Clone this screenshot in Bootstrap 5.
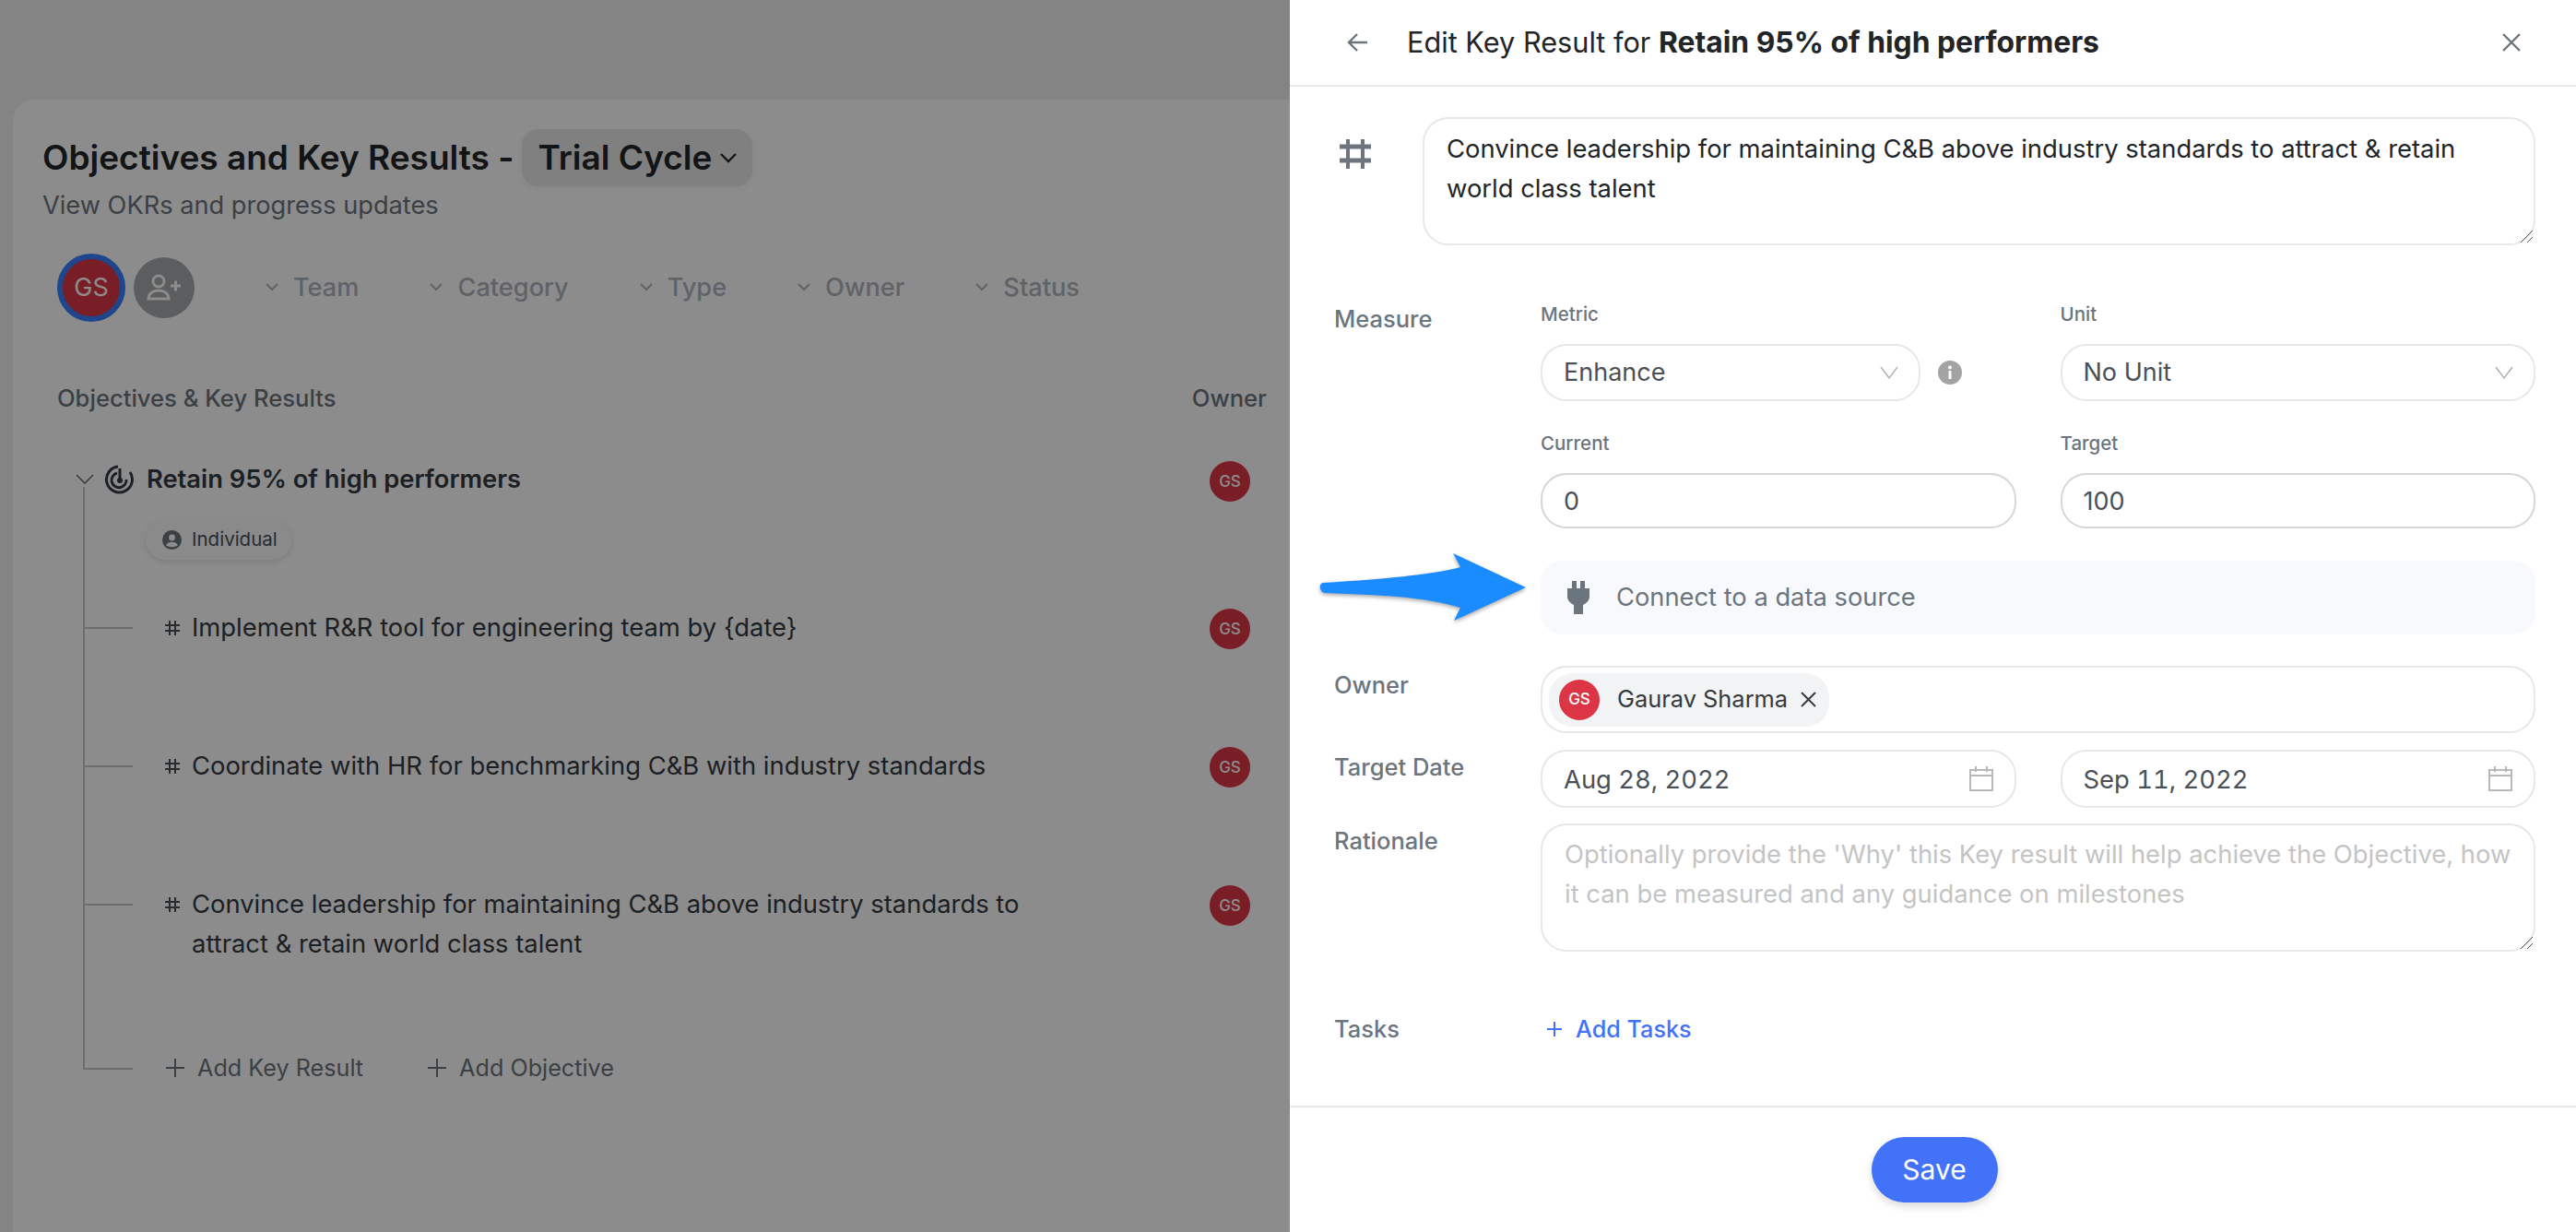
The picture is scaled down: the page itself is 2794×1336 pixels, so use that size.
<!DOCTYPE html>
<html lang="en">
<head>
<meta charset="utf-8">
<title>Edit Key Result</title>
<link href="https://cdn.jsdelivr.net/npm/bootstrap@5.3.0/dist/css/bootstrap.min.css" rel="stylesheet">
<style>
html,body{height:100%;overflow:hidden}
body{font-family:Inter,"Liberation Sans",sans-serif;background:#f1f1f1;color:#212529}
.app-shell{height:1336px;padding:108px 0 0 14px}
.okr-sheet{background:#fff;height:100%;border-radius:24px 0 0 0;padding:32px 0 0 32px;width:1500px}
.okr-title{font-size:37px;font-weight:600;line-height:62px;margin:0}
.cycle-pill{background:#e9e9e9;border-radius:18px;padding:0 16px 0 17px;height:62px;margin-left:9px;box-shadow:0 2px 6px rgba(0,0,0,.06)}
.okr-sub{font-size:27.2px;color:#6c757d;line-height:40px;margin-top:1px}
.filter-bar{height:76px;margin-top:31px;padding-left:16px}
.me-avatar{width:74px;height:74px;border-radius:50%;background:#dc3545;border:6px solid #3a80ff;color:#fff;font-size:27px;padding:0}
.add-avatar{width:66px;height:66px;border-radius:50%;background:#a6a9ac;margin-left:9px;margin-right:77px}
.filter-item{font-size:27.2px;color:#adb5bd;font-weight:500;gap:16px;margin-right:77px}
.okr-heads{width:1328px;margin-top:64px;padding:0 0 0 16px;font-size:25.6px;font-weight:500;color:#6c757d;line-height:36px}
.okr-obj{margin-top:46px;padding-left:36px;font-size:27.3px;font-weight:600;color:#343a40;line-height:42px;width:1310px}
.tag-pill{margin:36px 0 0 66px;height:43px;width:158px;border-radius:22px;background:#fbfbfb;box-shadow:0 2px 7px rgba(0,0,0,.12);font-size:20.5px;color:#495057;gap:11px;padding-left:18px}
.tree-body{display:flow-root;margin-left:44px;border-left:2px solid #c8c8c8;height:630px;width:1270px;margin-top:-16px}
.tree-row{position:relative;height:150px;padding-left:96px;font-size:27.4px;line-height:42.5px;color:#343a40}
.tree-row:before{content:"";position:absolute;left:0;top:21px;width:52px;height:2px;background:#c8c8c8}
.tree-first{margin-top:52px}
.row-hash{position:absolute;left:86px}
.mini-avatar{width:44px;height:44px;border-radius:50%;background:#dc3545;color:#fff;font-size:17px;font-weight:500;flex:none}
.obj-owner{margin-top:4px}
.row-text{width:960px;padding-left:20px}
.row-owner{position:absolute;left:1220px;top:1px}
.add-row{position:relative;margin-left:44px;padding-left:90px;font-size:25.2px;color:#6c757d;line-height:36px;margin-top:-18px;gap:70px}
.add-row:before{content:"";position:absolute;left:0;top:18px;width:54px;height:2px;background:#c8c8c8}
.add-row svg{margin-right:14px}
.dim-layer{position:fixed;inset:0;background:rgba(0,0,0,.45);z-index:1040}
.edit-panel{position:fixed;top:0;right:0;bottom:0;width:1395px;background:#fff;z-index:1045}
.panel-head{height:94px;border-bottom:2px solid #e4e8ea;padding:0 60px 0 62px;font-size:30.7px;line-height:44px;flex:none}
.panel-head .title-text{margin-left:41px}
.panel-head b{font-weight:700;font-size:31.8px}
.panel-main{padding:33px 44px 0 48px;flex:1 1 auto}
.hash-col{width:96px;padding:23px 0 0 6px}
.kr-area,.note-area{height:139px;border:2px solid #e4e8ea;border-radius:28px;padding:11px 24px;font-size:27.4px;line-height:42.5px;color:#212529;box-shadow:none;resize:vertical}
.kr-area::-webkit-resizer,.note-area::-webkit-resizer{background:url("data:image/svg+xml,%3csvg xmlns='http://www.w3.org/2000/svg' viewBox='0 0 15 15'%3e%3cpath d='M1 14L14 1M8 14l6-6' stroke='%23555' stroke-width='1' fill='none'/%3e%3c/svg%3e") no-repeat center}
.note-area{padding:10px 24px}
.note-area::placeholder{color:#c4c4c4}
.field-row{display:flex}
.field-label{width:224px;flex:none;font-size:25.5px;font-weight:500;line-height:42px;color:#6c757d}
.label-up{margin-top:-2px}
.field-main{flex:1 1 auto;min-width:0}
.mini-label{font-size:20.5px;line-height:30px;color:#6c757d;font-weight:500;margin:1px 0 17px}
.gut-row{--bs-gutter-x:48px;--bs-gutter-y:0}
.pill-select{height:62px;border:2px solid #e4e8ea;border-radius:28px;font-size:27px;color:#495057;padding:0 50px 0 23px;background-position:right 20px center;background-size:24px 24px;background-image:url("data:image/svg+xml,%3csvg xmlns='http://www.w3.org/2000/svg' viewBox='0 0 24 24'%3e%3cpath fill='none' stroke='%23b5b5b5' stroke-width='1.6' d='M3 6l9 12 9-12'/%3e%3c/svg%3e")}
.metric-select{width:412px;flex:none}
.pill-input{height:60px;border:2px solid #d6d6d6;border-radius:28px;font-size:27px;color:#495057;padding:0 23px}
.info-dot{margin-left:19px}
.connect-box{height:80px;background:#f8f9fd;border-radius:24px;margin:35px 0 34px;padding-left:28px;font-size:27.3px;color:#6c757d;gap:28px}
.owner-box{height:73px;border:2px solid #e4e8ea;border-radius:28px;padding:0 7px;margin-bottom:18px}
.owner-chip{height:58px;width:304px;background:#f2f3f5;border-radius:26px;padding-left:11px;font-size:25.4px;color:#343a40}
.owner-chip .chip-name{margin-left:19px}
.owner-chip svg{margin-left:14px}
.date-input{height:63px;border:2px solid #e4e8ea;border-radius:28px;font-size:27.4px;font-feature-settings:"tnum";color:#495057;padding:0 23px;background-repeat:no-repeat;background-position:right 22px center;background-size:28px 28px;background-image:url("data:image/svg+xml,%3csvg xmlns='http://www.w3.org/2000/svg' viewBox='0 0 28 28'%3e%3cg fill='none' stroke='%23b8b8b8' stroke-width='2'%3e%3crect x='2' y='4' width='24' height='22'/%3e%3cpath d='M2 10h24M8 0v6M20 0v6'/%3e%3c/g%3e%3c/svg%3e")}
.tasks-line{margin-top:63px}
.add-link{font-size:25.2px;line-height:42px;color:#4272f8;font-weight:500;gap:14px;padding-left:6px}
.panel-foot{height:137px;border-top:2px solid #e4e8ea;flex:none;padding:32px 0 0 3px}
.save-btn{width:137px;height:71px;border-radius:36px;background:#4272f8;color:#fff;font-size:30px;border:0;box-shadow:0 4px 10px rgba(0,0,0,.15);padding:0}
.call-arrow{position:fixed;left:1425px;top:594px;z-index:1050;filter:drop-shadow(0 2px 2px rgba(0,0,0,.35))}
</style>
</head>
<body>
<div class="app-shell">
  <div class="okr-sheet">
    <h1 class="okr-title d-flex align-items-center">Objectives and Key Results -
      <span class="cycle-pill d-inline-flex align-items-center">Trial Cycle
        <svg class="ms-2" width="20" height="12" viewBox="0 0 20 12"><path d="M2 2l8 8 8-8" fill="none" stroke="#212529" stroke-width="2.4"/></svg>
      </span>
    </h1>
    <div class="okr-sub">View OKRs and progress updates</div>
    <div class="filter-bar d-flex align-items-center">
      <div class="me-avatar d-flex align-items-center justify-content-center">GS</div>
      <div class="add-avatar d-flex align-items-center justify-content-center">
        <svg width="38" height="30" viewBox="0 0 38 30"><g fill="none" stroke="#fff" stroke-width="3"><circle cx="13" cy="8" r="6"/><path d="M2 27c0-12 22-12 22 0z"/><path d="M26 13h11M31.500 7.500v11"/></g></svg>
      </div>
      <div class="filter-item d-flex align-items-center"><svg width="14" height="9" viewBox="0 0 14 9"><path d="M1 1l6 6 6-6" fill="none" stroke="#adb5bd" stroke-width="2"/></svg>Team</div>
      <div class="filter-item d-flex align-items-center"><svg width="14" height="9" viewBox="0 0 14 9"><path d="M1 1l6 6 6-6" fill="none" stroke="#adb5bd" stroke-width="2"/></svg>Category</div>
      <div class="filter-item d-flex align-items-center"><svg width="14" height="9" viewBox="0 0 14 9"><path d="M1 1l6 6 6-6" fill="none" stroke="#adb5bd" stroke-width="2"/></svg>Type</div>
      <div class="filter-item d-flex align-items-center"><svg width="14" height="9" viewBox="0 0 14 9"><path d="M1 1l6 6 6-6" fill="none" stroke="#adb5bd" stroke-width="2"/></svg>Owner</div>
      <div class="filter-item d-flex align-items-center"><svg width="14" height="9" viewBox="0 0 14 9"><path d="M1 1l6 6 6-6" fill="none" stroke="#adb5bd" stroke-width="2"/></svg>Status</div>
    </div>
    <div class="okr-heads d-flex justify-content-between"><span>Objectives &amp; Key Results</span><span>Owner</span></div>
    <div class="okr-obj d-flex align-items-center justify-content-between">
      <div class="d-flex align-items-center">
        <svg width="20" height="12" viewBox="0 0 20 12" style="margin-right:11px"><path d="M1 1l9 9 9-9" fill="none" stroke="#6c757d" stroke-width="1.6"/></svg>
        <svg width="34" height="34" viewBox="0 0 34 34" style="margin-right:12px"><g fill="none" stroke="#343a40" stroke-width="3"><path d="M15 3a14 14 0 1 0 13 6"/><path d="M14 10a8 8 0 1 0 10 7"/><path d="M17 5v12"/></g><circle cx="17" cy="18" r="3" fill="#343a40"/></svg>
        <span>Retain 95% of high performers</span>
      </div>
      <span class="mini-avatar obj-owner d-flex align-items-center justify-content-center">GS</span>
    </div>
    <div class="tree-body">
      <div class="tag-pill d-flex align-items-center">
        <svg width="21" height="21" viewBox="0 0 21 21"><circle cx="10.500" cy="10.500" r="10.500" fill="#6c757d"/><circle cx="10.500" cy="8" r="3.400" fill="#fff"/><path d="M4 16c2-4.500 11-4.500 13 0-3 3-10 3-13 0z" fill="#fff"/></svg>
        Individual
      </div>
      <div class="tree-row tree-first">
        <svg class="row-hash" width="18" height="42" viewBox="0 0 18 42"><path d="M6 14v16M12 14v16M1 19h16M1 25h16" stroke="#495057" stroke-width="2" fill="none"/></svg>
        <div class="row-text">Implement R&amp;R tool for engineering team by {date}</div>
        <span class="mini-avatar row-owner d-flex align-items-center justify-content-center">GS</span>
      </div>
      <div class="tree-row">
        <svg class="row-hash" width="18" height="42" viewBox="0 0 18 42"><path d="M6 14v16M12 14v16M1 19h16M1 25h16" stroke="#495057" stroke-width="2" fill="none"/></svg>
        <div class="row-text">Coordinate with HR for benchmarking C&amp;B with industry standards</div>
        <span class="mini-avatar row-owner d-flex align-items-center justify-content-center">GS</span>
      </div>
      <div class="tree-row">
        <svg class="row-hash" width="18" height="42" viewBox="0 0 18 42"><path d="M6 14v16M12 14v16M1 19h16M1 25h16" stroke="#495057" stroke-width="2" fill="none"/></svg>
        <div class="row-text">Convince leadership for maintaining C&amp;B above industry standards to attract &amp; retain world class talent</div>
        <span class="mini-avatar row-owner d-flex align-items-center justify-content-center">GS</span>
      </div>
    </div>
    <div class="add-row d-flex">
      <span class="d-flex align-items-center"><svg width="20" height="20" viewBox="0 0 20 20"><path d="M10 0v20M0 10h20" stroke="#6c757d" stroke-width="2"/></svg>Add Key Result</span>
      <span class="d-flex align-items-center"><svg width="20" height="20" viewBox="0 0 20 20"><path d="M10 0v20M0 10h20" stroke="#6c757d" stroke-width="2"/></svg>Add Objective</span>
    </div>
  </div>
</div>
<div class="dim-layer"></div>
<div class="edit-panel d-flex flex-column">
  <div class="panel-head d-flex align-items-center justify-content-between">
    <div class="d-flex align-items-center">
      <svg width="24" height="24" viewBox="0 0 24 24"><path d="M22 12H3M11 3l-9 9 9 9" fill="none" stroke="#6c757d" stroke-width="2.400"/></svg>
      <span class="title-text">Edit Key Result for <b>Retain 95% of high performers</b></span>
    </div>
    <svg width="20" height="20" viewBox="0 0 20 20"><path d="M1 1l18 18M19 1L1 19" fill="none" stroke="#6c757d" stroke-width="2.400"/></svg>
  </div>
  <div class="panel-main">
    <div class="d-flex">
      <div class="hash-col flex-shrink-0">
        <svg width="34" height="34" viewBox="0 0 34 34"><path d="M9 1v32M25 1v32" stroke="#6c757d" stroke-width="4" fill="none"/><path d="M0 9h34M0 24h34" stroke="#6c757d" stroke-width="5" fill="none"/></svg>
      </div>
      <textarea class="form-control kr-area">Convince leadership for maintaining C&amp;B above industry standards to attract &amp; retain world class talent</textarea>
    </div>
    <div class="field-row" style="margin-top:59px">
      <div class="field-label">Measure</div>
      <div class="field-main">
        <div class="row gut-row">
          <div class="col-6">
            <label class="mini-label d-block">Metric</label>
            <div class="d-flex align-items-center">
              <select class="form-select pill-select metric-select"><option>Enhance</option></select>
              <svg class="info-dot" width="26" height="26" viewBox="0 0 26 26"><circle cx="13" cy="13" r="13" fill="#a3a3a3"/><circle cx="13" cy="7.500" r="2" fill="#fff"/><rect x="11.500" y="11" width="3" height="9" fill="#fff"/></svg>
            </div>
          </div>
          <div class="col-6">
            <label class="mini-label d-block">Unit</label>
            <select class="form-select pill-select"><option>No Unit</option></select>
          </div>
        </div>
        <div class="row gut-row" style="margin-top:30px">
          <div class="col-6">
            <label class="mini-label d-block">Current</label>
            <input class="form-control pill-input" value="0">
          </div>
          <div class="col-6">
            <label class="mini-label d-block">Target</label>
            <input class="form-control pill-input" value="100">
          </div>
        </div>
        <div class="connect-box d-flex align-items-center">
          <svg width="26" height="36" viewBox="0 0 26 36"><path d="M6 0h5v8h4V0h5v8h5v9c0 4-3 7-7 9v10H8V26c-4-2-7-5-7-9V8h5z" fill="#6c757d"/></svg>
          Connect to a data source
        </div>
      </div>
    </div>
    <div class="field-row">
      <div class="field-label">Owner</div>
      <div class="field-main">
        <div class="owner-box d-flex align-items-center">
          <div class="owner-chip d-flex align-items-center">
            <span class="mini-avatar d-flex align-items-center justify-content-center">GS</span>
            <span class="chip-name">Gaurav Sharma</span>
            <svg width="17" height="17" viewBox="0 0 17 17"><path d="M1 1l15 15M16 1L1 16" fill="none" stroke="#343a40" stroke-width="2"/></svg>
          </div>
        </div>
      </div>
    </div>
    <div class="field-row" style="margin-bottom:17px">
      <div class="field-label label-up">Target Date</div>
      <div class="field-main">
        <div class="row gut-row">
          <div class="col-6"><input class="form-control date-input" value="Aug 28, 2022"></div>
          <div class="col-6"><input class="form-control date-input" value="Sep 11, 2022"></div>
        </div>
      </div>
    </div>
    <div class="field-row">
      <div class="field-label label-up">Rationale</div>
      <div class="field-main">
        <textarea class="form-control note-area" placeholder="Optionally provide the 'Why' this Key result will help achieve the Objective, how it can be measured and any guidance on milestones"></textarea>
      </div>
    </div>
    <div class="field-row tasks-line">
      <div class="field-label">Tasks</div>
      <div class="add-link d-flex align-items-center">
        <svg width="18" height="18" viewBox="0 0 18 18"><path d="M9 1v16M1 9h16" stroke="#4272f8" stroke-width="2"/></svg>
        Add Tasks
      </div>
    </div>
  </div>
  <div class="panel-foot d-flex justify-content-center">
    <button type="button" class="btn save-btn">Save</button>
  </div>
</div>
<svg class="call-arrow" width="236" height="92" viewBox="0 0 236 92"><path d="M10 38c60-4 116-8 149-17L151 6l79 37-78 36 7-14C120 52 60 51 12 49c-6-1-7-10-2-11z" fill="#1a8cff"/></svg>
<script src="https://cdn.jsdelivr.net/npm/bootstrap@5.3.0/dist/js/bootstrap.bundle.min.js"></script>
</body>
</html>
